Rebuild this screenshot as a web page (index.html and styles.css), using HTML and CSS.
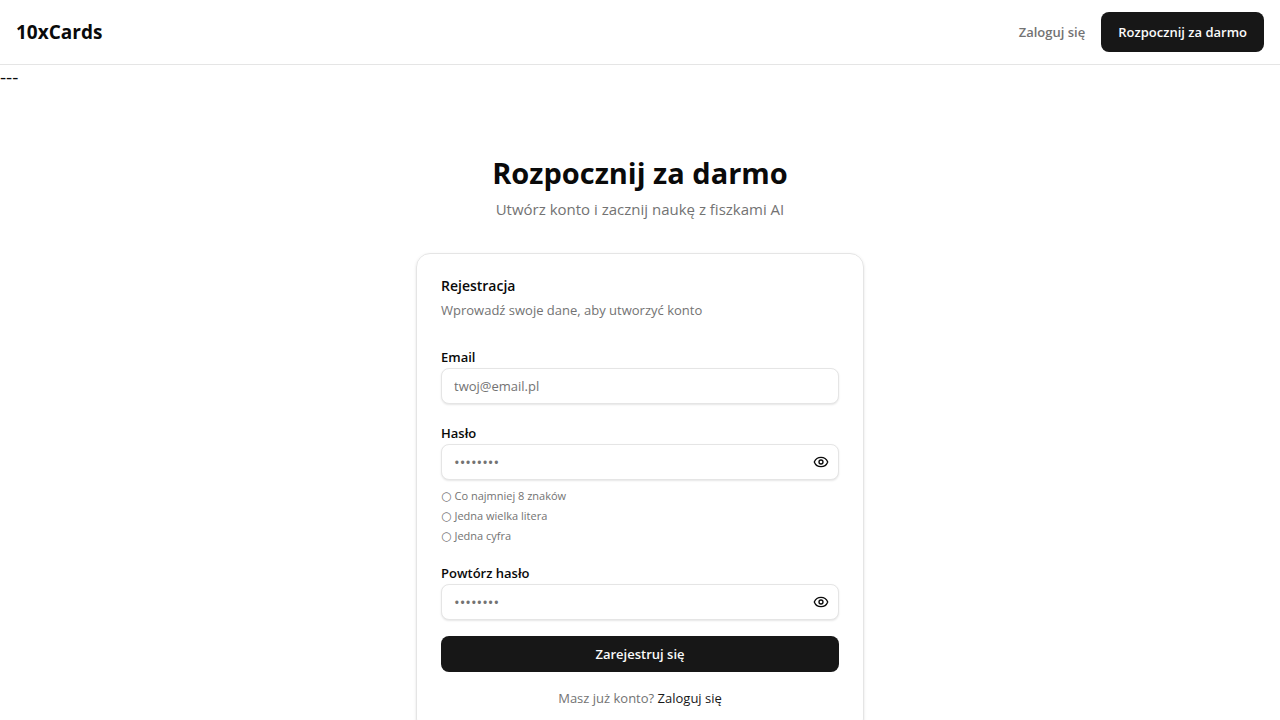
FILE: index.html
```html
<!DOCTYPE html>
<html lang="pl">
<head>
  <meta charset="utf-8">
  <meta name="viewport" content="width=device-width, initial-scale=1">
  <title>Rejestracja – 10xCards</title>
  <link rel="stylesheet" href="styles.css">
</head>
<body>
  <header class="header">
    <a class="brand" href="#">10xCards</a>
    <nav class="nav">
      <a class="nav-link" href="#">Zaloguj się</a>
      <a class="nav-cta" href="#">Rozpocznij za darmo</a>
    </nav>
  </header>
  <div class="marker">---</div>
  <main class="main">
    <div class="intro">
      <h1 class="title">Rozpocznij za darmo</h1>
      <p class="subtitle">Utwórz konto i zacznij naukę z fiszkami AI</p>
    </div>
    <section class="card">
      <div class="card-header">
        <h2 class="card-title">Rejestracja</h2>
        <p class="card-text">Wprowadź swoje dane, aby utworzyć konto</p>
      </div>
      <form class="form">
        <div class="field">
          <label class="label" for="email">Email</label>
          <input class="input" id="email" type="email" placeholder="twoj@email.pl">
        </div>
        <div class="field">
          <label class="label" for="password">Hasło</label>
          <div class="password">
            <input class="input" id="password" type="password" placeholder="••••••••">
            <button class="reveal" type="button" aria-label="Pokaż hasło">
              <svg class="eye" viewBox="0 0 24 24" aria-hidden="true"><path d="M2.062 12.348a1 1 0 0 1 0-.696 10.75 10.75 0 0 1 19.876 0 1 1 0 0 1 0 .696 10.75 10.75 0 0 1-19.876 0"/><circle cx="12" cy="12" r="3"/></svg>
            </button>
          </div>
          <ul class="rules">
            <li class="rule"><span class="ring">○</span>Co najmniej 8 znaków</li>
            <li class="rule"><span class="ring">○</span>Jedna wielka litera</li>
            <li class="rule"><span class="ring">○</span>Jedna cyfra</li>
          </ul>
        </div>
        <div class="field">
          <label class="label" for="repeat">Powtórz hasło</label>
          <div class="password">
            <input class="input" id="repeat" type="password" placeholder="••••••••">
            <button class="reveal" type="button" aria-label="Pokaż hasło">
              <svg class="eye" viewBox="0 0 24 24" aria-hidden="true"><path d="M2.062 12.348a1 1 0 0 1 0-.696 10.75 10.75 0 0 1 19.876 0 1 1 0 0 1 0 .696 10.75 10.75 0 0 1-19.876 0"/><circle cx="12" cy="12" r="3"/></svg>
            </button>
          </div>
        </div>
        <button class="submit" type="submit">Zarejestruj się</button>
        <p class="footnote">Masz już konto? <a class="footnote-link" href="#">Zaloguj się</a></p>
      </form>
    </section>
  </main>
</body>
</html>
```
FILE: styles.css
```css
* {
  box-sizing: border-box;
  margin: 0;
  padding: 0;
}

html {
  scrollbar-width: none;
}

body {
  background: #fff;
  color: #0a0a0a;
  font-family: "Segoe UI", "Open Sans", "Noto Sans", sans-serif;
  font-size: 16px;
  line-height: 24px;
}

a {
  color: inherit;
  text-decoration: none;
}

.header {
  display: flex;
  align-items: center;
  justify-content: space-between;
  padding: 12px 16px;
  border-bottom: 1px solid #e5e5e5;
}

.brand {
  font-size: 19px;
  font-weight: 700;
  line-height: 28px;
}

.nav {
  display: flex;
  align-items: center;
  gap: 16px;
  font-size: 13px;
  font-weight: 600;
  line-height: 20px;
}

.nav-link {
  color: #737373;
}

.nav-cta {
  padding: 10px 17px;
  border-radius: 8px;
  background: #171717;
  color: #fafafa;
}

.marker {
  font-size: 19px;
}

.main {
  max-width: 480px;
  margin: 0 auto;
  padding: 64px 16px;
}

.intro {
  display: flex;
  flex-direction: column;
  gap: 4px;
  margin-bottom: 32px;
  text-align: center;
}

.title {
  font-size: 29px;
  font-weight: 700;
  line-height: 40px;
}

.subtitle {
  color: #737373;
  font-size: 15px;
}

.card {
  padding: 24px;
  border: 1px solid #e5e5e5;
  border-radius: 14px;
  box-shadow: 0 1px 3px rgba(0, 0, 0, 0.1), 0 1px 2px -1px rgba(0, 0, 0, 0.1);
}

.card-header {
  display: flex;
  flex-direction: column;
  gap: 6px;
  margin-bottom: 24px;
}

.card-title {
  font-size: 14px;
  font-weight: 600;
  line-height: 16px;
}

.card-text {
  color: #737373;
  font-size: 13px;
  line-height: 20px;
}

.form {
  display: flex;
  flex-direction: column;
  gap: 16px;
}

.label {
  display: block;
  padding-top: 2px;
  font-size: 13px;
  font-weight: 600;
  line-height: 22px;
}

.input {
  display: block;
  width: 100%;
  height: 36px;
  padding: 4px 12px;
  border: 1px solid #e5e5e5;
  border-radius: 8px;
  background: #fff;
  box-shadow: 0 1px 2px rgba(0, 0, 0, 0.1);
  color: #0a0a0a;
  font: inherit;
  font-size: 13px;
}

.input::placeholder {
  color: #737373;
}

.password {
  position: relative;
}

.password .input {
  padding-right: 40px;
  font-size: 15px;
}

.reveal {
  position: absolute;
  top: 0;
  right: 0;
  display: grid;
  place-items: center;
  width: 36px;
  height: 36px;
  border: 0;
  background: none;
  color: #0a0a0a;
}

.eye {
  width: 16px;
  height: 16px;
  fill: none;
  stroke: currentColor;
  stroke-width: 2;
  stroke-linecap: round;
  stroke-linejoin: round;
}

.rules {
  display: flex;
  flex-direction: column;
  gap: 4px;
  margin-top: 8px;
  list-style: none;
}

.rule {
  display: flex;
  align-items: center;
  gap: 3px;
  color: #737373;
  font-size: 11px;
  line-height: 16px;
}

.ring {
  font-family: "DejaVu Sans", sans-serif;
  font-size: 12px;
}

.submit {
  height: 36px;
  border: 0;
  border-radius: 8px;
  background: #171717;
  color: #fafafa;
  font: inherit;
  font-size: 13px;
  font-weight: 600;
}

.footnote {
  color: #737373;
  font-size: 13px;
  line-height: 20px;
  text-align: center;
}

.footnote-link {
  color: #171717;
}
```
